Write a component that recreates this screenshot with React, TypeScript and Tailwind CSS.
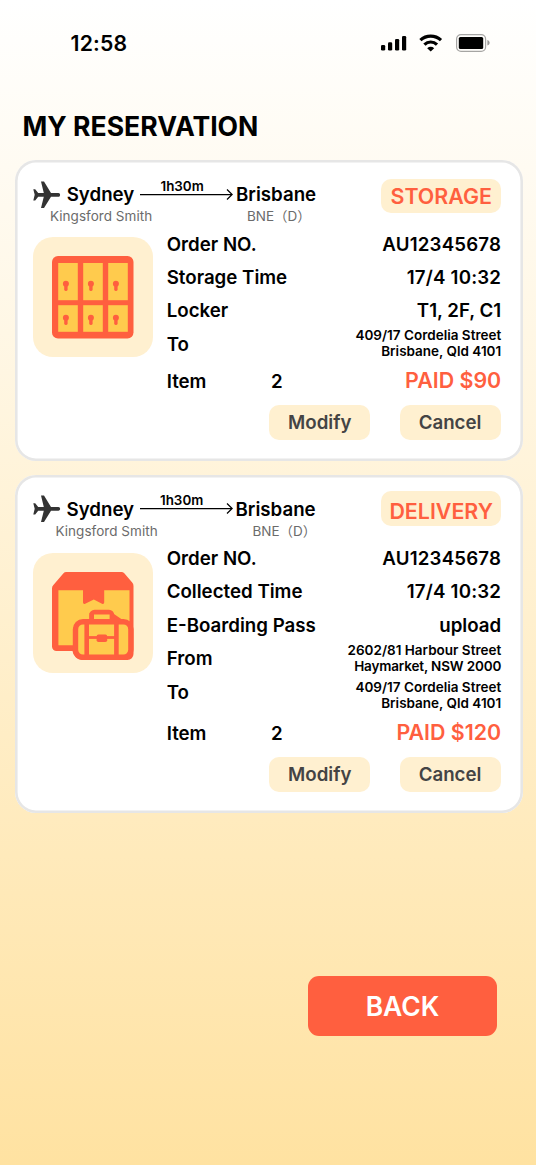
interface DetailRow {
  label: string;
  value?: string;
  wide?: boolean;
  address?: string[];
  low?: boolean;
}

interface Reservation {
  id: string;
  type: 'STORAGE' | 'DELIVERY';
  rows: DetailRow[];
  items: number;
  paid: string;
}

const reservations: Reservation[] = [
  {
    id: 'storage',
    type: 'STORAGE',
    rows: [
      { label: 'Order NO.', value: 'AU12345678', wide: true },
      { label: 'Storage Time', value: '17/4 10:32', wide: true },
      { label: 'Locker', value: 'T1, 2F, C1' },
      { label: 'To', address: ['409/17 Cordelia Street', 'Brisbane, Qld 4101'] },
    ],
    items: 2,
    paid: 'PAID $90',
  },
  {
    id: 'delivery',
    type: 'DELIVERY',
    rows: [
      { label: 'Order NO.', value: 'AU12345678', wide: true },
      { label: 'Collected Time', value: '17/4 10:32', wide: true },
      { label: 'E-Boarding Pass', value: 'upload' },
      { label: 'From', address: ['2602/81 Harbour Street', 'Haymarket, NSW 2000'] },
      { label: 'To', address: ['409/17 Cordelia Street', 'Brisbane, Qld 4101'], low: true },
    ],
    items: 2,
    paid: 'PAID $120',
  },
];

function StatusBar() {
  return (
    <div className="flex h-[86px] items-center justify-between pl-[70.5px] pr-[45px]">
      <span className="text-[21.2px] leading-[26px] font-semibold tracking-[0.2px]">12:58</span>
      <div className="flex items-center">
        {/* Signal */}
        <svg width="26" height="16" viewBox="0 0 26 16">
          <rect x="0" y="10" width="4.2" height="5.6" rx="1.3" />
          <rect x="7" y="7.2" width="4.2" height="8.4" rx="1.3" />
          <rect x="14" y="4" width="4.2" height="11.6" rx="1.3" />
          <rect x="21" y="1" width="4.2" height="14.6" rx="1.3" />
        </svg>
        {/* Wifi */}
        <svg className="ml-[12px]" width="24" height="18" viewBox="0 0 24 18">
          <g fill="none" stroke="#000" strokeWidth="3.2">
            <path d="M1.4 6.2C7.2 .8 16.2 .8 22 6.2" />
            <path d="M5.4 10.6C9 7.1 14.4 7.1 18 10.6" />
          </g>
          <path d="M8.2 14.2C10.2 12.4 13.2 12.4 15.2 14.2L11.7 17.6Z" />
        </svg>
        {/* Battery */}
        <svg className="ml-[13px]" width="35" height="18" viewBox="0 0 35 18">
          <rect x=".6" y=".6" width="29" height="16.8" rx="4.4" fill="none" stroke="#000" strokeOpacity=".35" strokeWidth="1.2" />
          <rect x="2.8" y="3" width="24.4" height="12" rx="1.6" />
          <path d="M31.4 6v5.6C34.4 10.4 34.4 7.2 31.4 6Z" fillOpacity=".4" />
        </svg>
      </div>
    </div>
  );
}

function PlaneIcon() {
  return (
    <svg className="-mt-px" width="28" height="28" viewBox="0 0 28 28" fill="#333">
      <path d="M0.3 8.2h1.9l3 3.7h5.6L8 .5h3l7 11.4h7.4c2.3 0 2.3 3.8 0 3.8H18L11 27.1H8l2.8-11.4H5.2l-3 3.7H.3l1.4-5.6z" />
    </svg>
  );
}

function LockerIcon() {
  return (
    <svg width="82" height="83" viewBox="0 0 82 83">
      <rect width="81.5" height="82.5" rx="6" fill="#ff5f3f" />
      {[6.2, 31.2, 56.2].map((x) => (
        <g key={x}>
          <rect x={x} y="7" width="19.6" height="37.2" fill="#ffcb4d" />
          <rect x={x} y="49.2" width="19.6" height="26.6" fill="#ffcb4d" />
          {[27.8, 61.8].map((y) => (
            <g key={y} fill="#ff5f3f">
              <circle cx={x + 7.7} cy={y} r="3" />
              <rect x={x + 6} y={y} width="3.4" height="7.2" rx="1.4" />
            </g>
          ))}
        </g>
      ))}
    </svg>
  );
}

function ParcelIcon() {
  return (
    <svg width="82" height="89" viewBox="0 0 82 89">
      <path
        d="M14.2 0H69.5c1 0 2 .4 2.8 1.2L80.2 10.6q1.3 1.4 1.3 3.4V82a6 6 0 0 1-6 6H30c-4.5 0-8.5-4-9.5-9H4.5A4.5 4.5 0 0 1 0 74.5V16.5q0-2 1.4-3.4L11.5 1.2Q12.5 0 14.2 0Z"
        fill="#ff5f3f"
      />
      <path
        d="M6.4 18.3H31V30.5q.2 2 2.2 1.2L41.8 27.5 50 31.7q2 .8 2.2-1.2V18.3H77.5V49.6L70 47.5 62 42 55 38.2H42L37.5 41V47.5L27 49.5 21 56V73.3H6.4Z"
        fill="#ffcb4d"
      />
      {/* Suitcase in front of the box */}
      <path d="M39.5 49V43a3 3 0 0 1 3-3H57a3 3 0 0 1 3 3v6" fill="none" stroke="#ff5f3f" strokeWidth="4.4" />
      <rect x="42" y="42.5" width="15.6" height="5.5" fill="#ffcb4d" />
      <rect x="23.5" y="49.7" width="55.4" height="35.6" rx="7.5" fill="#ffcb4d" stroke="#ff5f3f" strokeWidth="5.4" />
      <path d="M34.7 49V86M64.4 49V86" stroke="#ff5f3f" strokeWidth="4.6" />
      <path d="M34 65.5H66" stroke="#ff5f3f" strokeWidth="2.8" />
      <rect x="44.6" y="62.6" width="10.6" height="7.4" rx="1.8" fill="#ff5f3f" />
    </svg>
  );
}

function Route({ shifted }: { shifted: boolean }) {
  return (
    <div>
      <div className="flex h-[30px] items-center">
        <PlaneIcon />
        <span className={`text-[18.7px] font-semibold ${shifted ? 'ml-[5.5px] w-[73px]' : 'ml-[5.7px] w-[73.3px]'}`}>Sydney</span>
        <div className="-mt-[5px] flex h-[28px] w-[93px] flex-col pt-px">
          <span className="pl-[20.5px] text-[13.4px] leading-[12px] font-semibold">1h30m</span>
          <svg className="-mt-[3px]" width="93" height="12" viewBox="0 0 93 12" fill="none" stroke="#000" strokeWidth="1.25">
            <path d="M0 5.5H92M87 .5l5.2 5L87 10.5" />
          </svg>
        </div>
        <span className="ml-[3px] text-[18.7px] font-semibold">Brisbane</span>
      </div>
      <div className={`flex text-[13.5px] leading-[16px] text-[#6b6b6b] ${shifted ? '-mt-[1.5px] pl-[22.5px]' : '-mt-[2px] pl-[17px]'}`}>
        <span className="w-[197px] tracking-[0.03px]">Kingsford Smith</span>
        <span>BNE（D）</span>
      </div>
    </div>
  );
}

function ReservationCard({ reservation }: { reservation: Reservation }) {
  const { type, rows, items, paid } = reservation;
  const isDelivery = type === 'DELIVERY';

  return (
    <section
      className={`flex flex-col rounded-[21px] bg-white pt-[16px] pr-[21.5px] pl-[18px] shadow-[inset_0_0_0_2.6px_#e6e6e6] ${
        isDelivery ? 'h-[337.8px]' : 'h-[300.8px]'
      }`}
    >
      {/* Flight and order type */}
      <div className="flex h-[51px] items-start justify-between">
        <div className="pt-[4px]">
          <Route shifted={isDelivery} />
        </div>
        <div
          className={`flex h-[34.5px] w-[120px] items-center justify-center rounded-[10px] bg-[#fff0d0] text-[21.4px] font-semibold text-[#ff5f3f] ${
            isDelivery ? 'mt-[0.5px] pt-[5px]' : 'mt-[2.5px] pt-px'
          }`}
        >
          {type}
        </div>
      </div>

      <div className="flex">
        <div
          className={`flex size-[120px] shrink-0 justify-center rounded-[20px] bg-[#fff0d0] pt-[19px] ${
            isDelivery ? 'mt-[11px]' : 'mt-[10px]'
          }`}
        >
          {isDelivery ? <ParcelIcon /> : <LockerIcon />}
        </div>

        {/* Order details */}
        <div className={`ml-[13.7px] flex-1 ${isDelivery ? 'pt-[0.4px]' : 'pt-[0.9px]'}`}>
          {rows.map((row) => (
            <div key={row.label} className="flex h-[33.4px] items-center justify-between text-[18.7px] font-semibold">
              <span>{row.label}</span>
              {row.address ? (
                <span className={`text-right text-[13.5px] leading-[16px] ${row.low ? 'pt-[5px]' : 'pb-[3px]'}`}>
                  {row.address.map((line) => (
                    <span key={line} className={line.startsWith('Haymarket') ? 'block tracking-[-0.15px]' : 'block'}>
                      {line}
                    </span>
                  ))}
                </span>
              ) : (
                <span className={row.wide ? 'tracking-[0.18px]' : ''}>{row.value}</span>
              )}
            </div>
          ))}
          <div className={`flex h-[33.4px] items-center text-[18.7px] font-semibold ${isDelivery ? 'mt-[7.9px]' : 'mt-[4px]'}`}>
            <span className="w-[104.3px]">Item</span>
            <span>{items}</span>
            <span className={`ml-auto text-[21.4px] text-[#ff5f3f] ${isDelivery ? '-mt-[3px]' : '-mt-[4px]'}`}>{paid}</span>
          </div>
          <div className={`flex justify-end gap-[29.5px] ${isDelivery ? 'mt-[6.8px]' : 'mt-[6.5px]'}`}>
            <button className="h-[34.5px] w-[101.3px] rounded-[10px] bg-[#fff0d0] pt-px text-[18.7px] font-semibold text-[#444]">Modify</button>
            <button className="h-[34.5px] w-[101.3px] rounded-[10px] bg-[#fff0d0] pt-px pr-px text-[18.7px] font-semibold text-[#444]">Cancel</button>
          </div>
        </div>
      </div>
    </section>
  );
}

export default function App() {
  return (
    <div className="h-[1165px] w-[536px] overflow-hidden bg-linear-to-b from-white to-[#ffe2a1] font-[Inter,'Noto_Sans_CJK_SC',sans-serif] text-black">
      <StatusBar />
      <h1 className="h-[74px] pt-[24px] pl-[22.5px] text-[26.6px] leading-[33px] font-bold">MY RESERVATION</h1>
      <main className="flex flex-col gap-[14.2px] pr-[13.3px] pl-[15px]">
        {reservations.map((reservation) => (
          <ReservationCard key={reservation.id} reservation={reservation} />
        ))}
      </main>
      <div className="mt-[163px] flex justify-end pr-[38.8px]">
        <button className="h-[60px] w-[189.5px] rounded-[11px] bg-[#ff5f3f] pt-[2px] text-[26.4px] font-semibold text-white">BACK</button>
      </div>
    </div>
  );
}
